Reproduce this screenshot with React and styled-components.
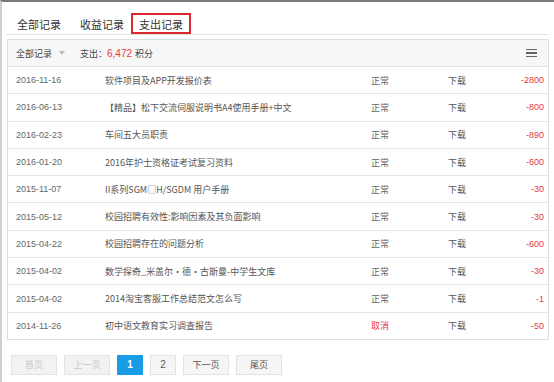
import React from 'react';
import styled, { createGlobalStyle } from 'styled-components';

const GlobalStyle = createGlobalStyle`
  html, body {
    margin: 0;
    padding: 0;
    background: #fff;
  }
  body {
    font-family: "Noto Sans CJK SC", "Liberation Sans", sans-serif;
    color: #555;
  }
`;

const Page = styled.div`
  width: 554px;
  height: 382px;
  box-sizing: border-box;
  border-top: 2px solid #7a7a7a;
  border-left: 2px solid #cfcfcf;
  padding: 11px 5px 0 5px;
`;

const TabBar = styled.div`
  display: flex;
  align-items: flex-end;
  height: 21px;
  border-bottom: 1px solid #e2e2e2;
  margin-right: 1px;
`;

const Tab = styled.div`
  box-sizing: border-box;
  height: 21px;
  padding: ${p => (p.$active ? '0 6px' : '0 9px 0 10px')};
  margin-left: ${p => (p.$active ? '-2px' : '0')};
  display: flex;
  align-items: center;
  font-size: 11px;
  color: #333;
  border: ${p => (p.$active ? '2px solid #d9272e' : 'none')};
  background: #fff;
`;

const Panel = styled.div`
  margin-top: 4px;
  border: 1px solid #dedede;
`;

const PanelHead = styled.div`
  height: 26px;
  display: flex;
  align-items: center;
  padding: 0 8px;
  background: #f7f7f7;
  border-bottom: 1px solid #e2e2e2;
  font-size: 9px;
  color: #444;
`;

const Filter = styled.span`
  display: flex;
  align-items: center;
  gap: 7px;
  margin-right: 15px;
`;

const Caret = styled.span`
  width: 0;
  height: 0;
  border-left: 3px solid transparent;
  border-right: 3px solid transparent;
  border-top: 4px solid #bbb;
`;

const Red = styled.span`
  color: #e8383d;
  margin: 0 3px 0 0;
  font-family: "Liberation Sans", sans-serif;
  font-size: 10px;
`;

const Menu = styled.span`
  margin-left: auto;
  display: flex;
  flex-direction: column;
  gap: 2px;
  margin-right: 3px;
  span {
    display: block;
    width: 11px;
    height: 1.5px;
    background: #666;
  }
`;

const Row = styled.div`
  display: grid;
  grid-template-columns: 89px 266px 77px 1fr auto;
  align-items: center;
  height: 26.3px;
  padding: 0 4px 0 8px;
  border-top: ${p => (p.$first ? 'none' : '1px solid #e6e6e6')};
  font-size: 9px;
  color: #555;
`;

const DateCell = styled.span`
  font-family: "Liberation Sans", sans-serif;
  font-size: 9px;
  color: #666;
`;

const Status = styled.span`
  color: ${p => (p.$cancel ? '#e8383d' : '#666')};
`;

const Amount = styled.span`
  color: #e8383d;
  font-family: "Liberation Sans", sans-serif;
  font-size: 9px;
  text-align: right;
`;

const Pager = styled.div`
  display: flex;
  gap: 7px;
  margin: 15px 0 0 4px;
`;

const PageBtn = styled.span`
  box-sizing: border-box;
  height: 20px;
  width: ${p => (p.$narrow ? '26px' : '46px')};
  display: flex;
  align-items: center;
  justify-content: center;
  font-size: ${p => (p.$num ? '10px' : '9px')};
  font-family: "Liberation Sans", "Noto Sans CJK SC", sans-serif;
  font-weight: ${p => (p.$current ? 'bold' : 'normal')};
  border: 1px solid ${p => (p.$current ? '#1a9be6' : '#e3e3e3')};
  background: ${p => (p.$current ? '#1a9be6' : p.$disabled ? '#f2f2f2' : '#f5f5f5')};
  color: ${p => (p.$current ? '#fff' : p.$disabled ? '#c8c8c8' : '#555')};
`;

const records = [
  ['2016-11-16', '软件项目及APP开发报价表', '正常', '-2800'],
  ['2016-06-13', '【精品】松下交流伺服说明书A4使用手册+中文', '正常', '-800'],
  ['2016-02-23', '车间五大员职责', '正常', '-890'],
  ['2016-01-20', '2016年护士资格证考试复习资料', '正常', '-600'],
  ['2015-11-07', 'II系列SGM□H/SGDM 用户手册', '正常', '-30'],
  ['2015-05-12', '校园招聘有效性:影响因素及其负面影响', '正常', '-30'],
  ['2015-04-22', '校园招聘存在的问题分析', '正常', '-600'],
  ['2015-04-02', '数学探奇_米盖尔·德·古斯曼-中学生文库', '正常', '-30'],
  ['2015-04-02', '2014淘宝客服工作总结范文怎么写', '正常', '-1'],
  ['2014-11-26', '初中语文教育实习调查报告', '取消', '-50'],
];

export default function App() {
  return (
    <>
      <GlobalStyle />
      <Page>
        <TabBar>
          <Tab>全部记录</Tab>
          <Tab>收益记录</Tab>
          <Tab $active>支出记录</Tab>
        </TabBar>
        <Panel>
          <PanelHead>
            <Filter>
              全部记录 <Caret />
            </Filter>
            支出：<Red>6,472</Red>积分
            <Menu>
              <span />
              <span />
              <span />
            </Menu>
          </PanelHead>
          {records.map(([date, title, status, amount], i) => (
            <Row key={i} $first={i === 0}>
              <DateCell>{date}</DateCell>
              <span>{title}</span>
              <Status $cancel={status === '取消'}>{status}</Status>
              <span>下载</span>
              <Amount>{amount}</Amount>
            </Row>
          ))}
        </Panel>
        <Pager>
          <PageBtn $disabled>首页</PageBtn>
          <PageBtn $disabled>上一页</PageBtn>
          <PageBtn $narrow $num $current>1</PageBtn>
          <PageBtn $narrow $num>2</PageBtn>
          <PageBtn>下一页</PageBtn>
          <PageBtn>尾页</PageBtn>
        </Pager>
      </Page>
    </>
  );
}
